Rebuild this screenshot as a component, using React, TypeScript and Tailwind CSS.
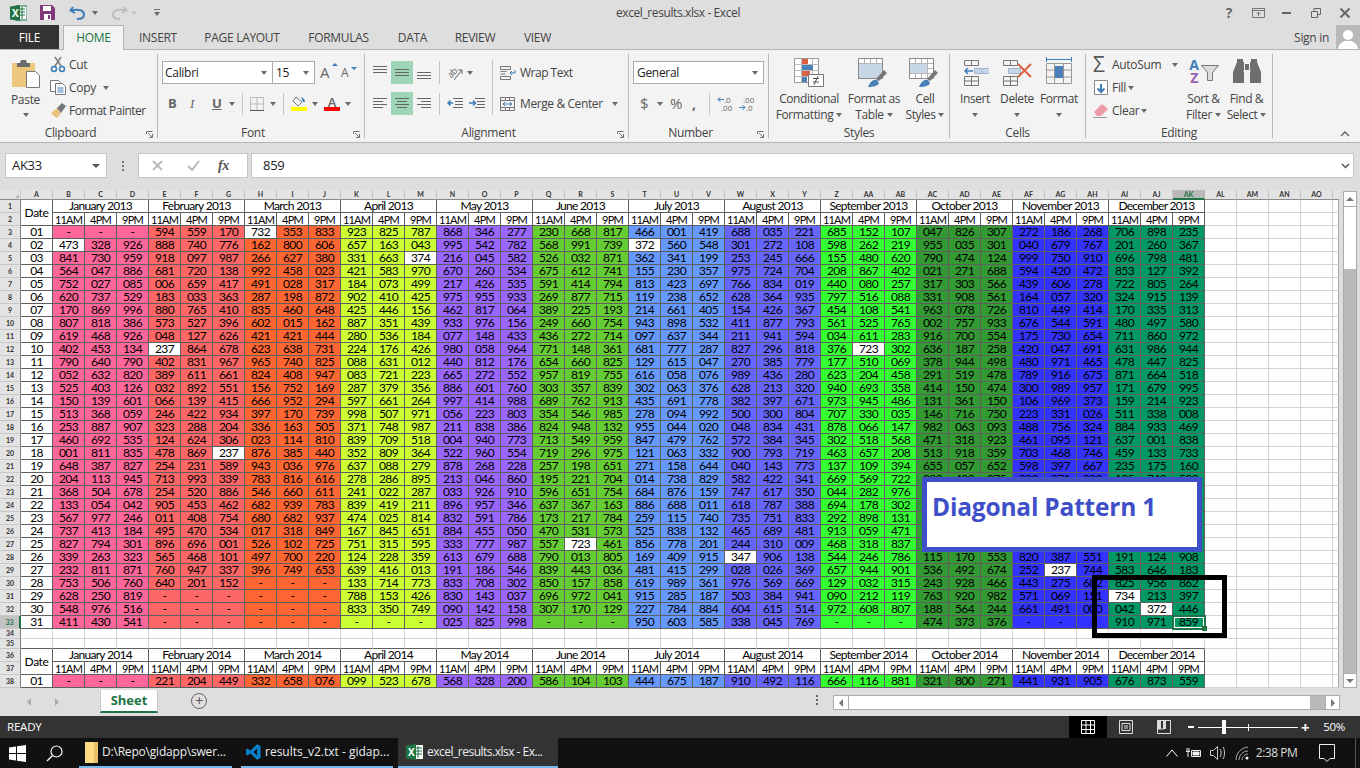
import type { ReactNode } from "react";
import { Fragment } from "react";

const COLS = "A B C D E F G H I J K L M N O P Q R S T U V W X Y Z AA AB AC AD AE AF AG AH AI AJ AK AL AM AN AO".split(" ");
const MONTHS = ["January", "February", "March", "April", "May", "June", "July", "August", "September", "October", "November", "December"];
const TIMES = ["11AM", "4PM", "9PM"];

const MONTH_BG = [
  "bg-[#ff6699]",
  "bg-[#ff6666]",
  "bg-[#ff6633]",
  "bg-[#ccff33]",
  "bg-[#9966ff]",
  "bg-[#66cc33]",
  "bg-[#6699ff]",
  "bg-[#6666ff]",
  "bg-[#33ff33]",
  "bg-[#339933]",
  "bg-[#3333ff]",
  "bg-[#009966]",
];

// * marks a cell without fill, _ sits behind the text box
const DATA_2013 = `- - - 594 559 170 732* 353 833 923 825 787 868 346 277 230 668 817 466 001 419 688 035 221 685 152 107 047 826 307 272 186 268 706 898 235
473* 328 926 888 740 776 162 800 606 657 163 043 995 542 782 568 991 739 372* 560 548 301 272 108 598 262 219 955 035 301 040 679 767 201 260 367
841 730 959 918 097 987 266 627 380 331 663 374* 216 045 582 526 032 871 362 341 199 253 245 666 155 480 620 790 474 124 999 750 910 696 798 481
564 047 886 681 720 138 992 458 023 421 583 970 670 260 534 675 612 741 155 230 357 975 724 704 208 867 402 021 271 688 594 420 472 853 127 392
752 027 085 006 659 417 491 028 317 184 073 499 217 426 535 591 414 794 813 423 697 766 834 019 440 080 257 317 303 566 439 606 278 722 805 264
620 737 529 183 033 363 287 198 872 902 410 425 975 955 933 269 877 715 119 238 652 628 364 935 797 516 088 331 908 561 164 057 320 324 915 139
170 869 996 880 765 410 835 460 648 425 446 156 462 817 064 389 225 193 214 661 405 154 426 367 454 108 541 963 078 726 810 449 414 170 335 313
807 818 386 573 527 396 602 015 162 887 351 439 933 976 156 249 660 754 943 898 532 411 877 793 561 525 765 002 757 933 676 544 591 480 497 580
619 468 926 048 127 626 421 421 444 280 536 184 077 148 433 436 272 714 097 637 344 211 941 594 034 611 283 916 700 554 175 730 654 711 860 972
402 453 134 237* 864 678 623 638 731 224 176 426 980 058 964 771 148 361 681 777 287 827 296 818 376 723* 302 636 187 258 420 047 691 631 986 944
790 640 790 402 831 967 965 740 825 088 631 012 440 812 176 654 660 825 129 615 047 270 385 779 177 510 069 378 944 498 480 971 465 478 447 825
052 632 820 389 611 661 824 408 947 083 721 223 665 272 552 957 819 755 616 058 076 989 436 280 623 204 458 291 519 478 789 916 675 871 664 518
525 403 126 032 892 551 156 752 169 287 379 356 886 601 760 303 357 839 302 063 376 628 213 320 940 693 358 414 150 474 300 989 957 171 679 995
150 139 601 066 139 415 666 952 294 597 661 264 997 414 988 689 762 913 435 691 778 382 397 671 973 945 486 131 361 150 106 969 373 159 214 923
513 368 059 246 422 934 397 170 739 998 507 971 056 223 803 354 546 985 278 094 992 500 300 804 707 330 035 146 716 750 223 331 026 511 338 008
253 887 907 323 288 204 336 163 505 371 748 987 211 838 386 824 948 132 955 044 020 048 834 431 878 066 147 982 063 093 488 756 324 884 933 469
460 692 535 124 624 306 023 114 810 839 709 518 004 940 773 713 549 959 847 479 762 572 384 345 302 518 568 471 318 923 461 095 121 637 001 838
001 811 835 478 869 237* 876 385 440 352 809 364 522 960 554 719 296 975 121 063 332 900 793 719 463 657 208 513 918 359 703 468 746 459 133 733
648 387 827 254 231 589 943 036 976 637 088 279 878 268 228 257 198 651 271 158 644 040 143 773 137 109 394 655 057 652 598 397 667 235 175 160
204 113 945 713 993 339 783 816 616 278 286 895 213 046 860 195 221 704 014 738 829 582 422 341 669 569 722 099 499 075 099 971 099 195 749 509
368 504 678 254 520 886 546 660 611 241 022 287 033 926 910 596 651 754 684 876 159 747 617 350 044 282 976 _ _ _ _ _ _ _ _ _
133 054 042 905 453 462 682 939 783 839 419 211 896 957 346 637 367 163 886 688 011 618 787 388 694 178 302 _ _ _ _ _ _ _ _ _
567 977 246 011 408 754 680 682 937 474 025 814 832 591 786 173 217 784 259 115 740 735 751 833 292 898 131 _ _ _ _ _ _ _ _ _
737 413 184 495 470 534 017 318 849 167 845 651 884 455 050 470 531 573 525 838 132 465 689 481 913 059 471 _ _ _ _ _ _ _ _ _
827 794 301 896 696 001 526 102 725 751 315 595 333 777 987 557 723* 461 856 778 201 244 310 009 468 318 837 _ _ _ _ _ _ _ _ _
339 263 323 565 468 101 497 700 220 124 228 359 613 679 688 790 013 805 169 409 915 347* 906 138 544 246 786 115 170 553 820 387 551 191 124 908
232 811 871 760 947 337 396 749 653 639 416 013 191 186 546 839 443 036 481 415 299 028 026 369 657 944 901 536 492 674 252 237* 744 583 646 183
753 506 760 640 201 152 - - - 133 714 773 833 708 302 850 157 858 619 989 361 976 569 669 129 032 315 243 928 466 443 275 682 825 956 862
628 250 819 - - - - - - 788 153 426 830 143 037 696 972 041 915 285 187 503 384 941 090 212 119 763 920 982 571 069 151 734* 213 397
548 976 516 - - - - - - 833 350 749 090 142 158 307 170 129 227 784 884 604 615 514 972 608 807 188 564 244 661 491 000 042 372* 446
411 430 541 - - - - - - - - - 025 825 998 - - - 950 603 585 338 045 769 - - - 474 373 376 - - - 910 971 859`
  .split("\n")
  .map((l) => l.split(" "));

const DATA_2014 = "- - - 221 204 449 332 658 076 099 523 678 568 328 200 586 104 103 444 675 187 910 492 116 666 116 881 321 800 271 441 931 905 676 873 559".split(" ");

const dark = "border-r border-b border-[#5f5f5f]";

function RowHead({ n, active }: { n: number; active?: boolean }) {
  return (
    <div
      className={`flex items-center justify-center border-b border-[#c8c8c8] text-[7px] font-bold ${
        active ? "border-r-2 border-r-[#217346] bg-[#c2c2c2] text-[#217346]" : "border-r border-r-[#7d7d7d] bg-[#e3e3e3] text-[#333]"
      }`}
    >
      {n}
    </div>
  );
}

function Blanks({ k }: { k: string }) {
  return (
    <>
      {[0, 1, 2, 3].map((i) => (
        <div key={k + i} className="border-r border-b border-[#d4d4d4] bg-white" />
      ))}
      <div className="border-r border-b border-r-[#a9a9a9] border-b-[#d4d4d4] bg-white" />
    </>
  );
}

function HeaderRows({ year, first }: { year: number; first: number }) {
  return (
    <>
      <RowHead n={first} />
      <div className={`row-span-2 flex items-center justify-center bg-white text-[12px] tracking-[-0.4px] ${dark}`}>Date</div>
      {MONTHS.map((m) => (
        <div key={m} className={`col-span-3 flex items-center justify-center bg-white text-[12px] leading-none tracking-[-0.7px] ${dark}`}>
          {m} {year}
        </div>
      ))}
      <Blanks k={`h${first}`} />
      <RowHead n={first + 1} />
      {MONTHS.map((m) =>
        TIMES.map((t) => (
          <div key={m + t} className={`flex items-center justify-center bg-white text-[11px] leading-none tracking-[-0.8px] ${dark}`}>
            {t}
          </div>
        )),
      )}
      <Blanks k={`t${first}`} />
    </>
  );
}

function DataRow({ row, date, values }: { row: number; date: string; values: string[] }) {
  return (
    <>
      <RowHead n={row} active={row === 33} />
      <div className={`flex items-center justify-center bg-white text-[12px] leading-none tracking-[-0.7px] ${dark}`}>{date}</div>
      {values.map((v, i) => {
        const white = v.endsWith("*");
        const selected = row === 33 && i === 35;
        return (
          <div
            key={i}
            className={`relative flex items-center justify-center text-[12px] leading-none tracking-[-0.7px] text-black ${dark} ${
              white ? "bg-white" : MONTH_BG[Math.floor(i / 3)]
            }`}
          >
            {v === "_" ? "" : v.replace("*", "")}
            {selected && (
              <>
                <div className="absolute -top-px right-[-2px] bottom-[-2px] -left-px border-2 border-[#217346] shadow-[inset_0_0_0_1px_#fff]" />
                <div className="absolute right-[-3px] bottom-[-3px] size-[5px] bg-[#217346]" />
              </>
            )}
          </div>
        );
      })}
      <Blanks k={`r${row}`} />
    </>
  );
}

function Sheet() {
  return (
    <div className="relative flex h-[498px]">
      <div className="grid h-[498px] w-[1339px] grid-cols-[21px_repeat(41,32px)_6px] grid-rows-[10px_repeat(33,13px)_10px_10px_repeat(3,13px)] bg-white">
        <div className="flex items-end justify-end border-r border-b border-r-[#c8c8c8] border-b-[#8a8a8a] bg-[#e3e3e3] p-[1px]">
          <div className="size-0 border-b-[4px] border-l-[4px] border-b-[#b0b0b0] border-l-transparent" />
        </div>
        {COLS.map((c) => (
          <div
            key={c}
            className={`flex items-center justify-center border-r text-[7px] leading-none font-bold ${
              c === "AK"
                ? "border-b-2 border-r-[#b0b0b0] border-b-[#217346] bg-[#b9b9b9] text-[#217346]"
                : "border-b border-r-[#c4c4c4] border-b-[#8a8a8a] bg-[#e3e3e3] text-[#333]"
            }`}
          >
            {c}
          </div>
        ))}
        <div className="border-b border-b-[#8a8a8a] bg-[#e3e3e3]" />
        <HeaderRows year={2013} first={1} />
        {DATA_2013.map((values, i) => (
          <DataRow key={i} row={i + 3} date={String(i + 1).padStart(2, "0")} values={values} />
        ))}
        {[34, 35].map((r) => (
          <Fragment key={r}>
            <RowHead n={r} />
            {COLS.slice(0, 37).map((c) => (
              <div key={c} className={`border-r border-b border-r-[#d4d4d4] bg-white ${r === 35 ? "border-b-[#5f5f5f]" : "border-b-[#d4d4d4]"}`} />
            ))}
            <Blanks k={`b${r}`} />
          </Fragment>
        ))}
        <HeaderRows year={2014} first={36} />
        <DataRow row={38} date="01" values={DATA_2014} />
      </div>

      {/* vertical scrollbar */}
      <div className="flex w-[21px] flex-col bg-[#dedede] pt-[1px] pl-[4px]">
        <div className="flex w-[14px] flex-1 flex-col border border-[#ababab] bg-[#b9b9b9]">
          <div className="flex h-[15px] items-center justify-center border-b border-[#ababab] bg-white">
            <div className="size-0 border-x-[4px] border-b-[4px] border-x-transparent border-b-[#777]" />
          </div>
          <div className="h-[62px] bg-white" />
          <div className="flex-1" />
          <div className="flex h-[14px] items-center justify-center border-t border-[#ababab] bg-white">
            <div className="size-0 border-x-[4px] border-t-[4px] border-x-transparent border-t-[#777]" />
          </div>
        </div>
      </div>

      {/* text box and marker drawn over the sheet */}
      <div className="absolute top-[287px] left-[922px] h-[75px] w-[280px] border-[5px] border-[#3f4fc8] bg-white px-[5px] pt-[8px] text-[26px] leading-[32px] font-bold text-[#3f4fc8]">
        <span className="font-['Open_Sans',sans-serif] text-[24.5px] tracking-[-0.2px]">Diagonal Pattern 1</span>
      </div>
      <div className="absolute top-[385px] left-[1092px] h-[63px] w-[135px] border-[5px] border-black" />
    </div>
  );
}

function Caret({ className = "" }: { className?: string }) {
  return <div className={`size-0 border-x-[3.5px] border-t-[4px] border-x-transparent border-t-[#6a6a6a] ${className}`} />;
}

function Sep({ className = "" }: { className?: string }) {
  return <div className={`w-px bg-[#c4c4c4] ${className}`} />;
}

function Group({ className, label, launcher, children }: { className: string; label: string; launcher?: boolean; children: ReactNode }) {
  return (
    <div className={`flex flex-col ${className}`}>
      <div className="h-[74px] flex-none">{children}</div>
      <div className={`relative flex h-[18px] items-center justify-center text-[12px] text-[#444] ${launcher ? "pr-[16px]" : ""}`}>
        {label}
        {launcher && (
          <svg className="absolute right-[4px] bottom-[4px]" width="7" height="7" viewBox="0 0 7 7" fill="none" stroke="#777">
            <path d="M.5 3V.5H6.5M2 2l4 4M3 6.5h3.5V3" />
          </svg>
        )}
      </div>
    </div>
  );
}

function GroupSep() {
  return <div className="mt-[4px] h-[84px] w-px flex-none bg-[#b9b9b9]" />;
}

function BigBtn({ className, icon, l1, l2 }: { className: string; icon: ReactNode; l1: string; l2?: string }) {
  return (
    <div className={`flex flex-none flex-col items-center text-[12px] leading-[16px] tracking-[-0.4px] whitespace-nowrap text-[#444] ${className}`}>
      <div className="flex h-[41px] items-start justify-center pt-[8px]">{icon}</div>
      <div>{l1}</div>
      <div className="flex h-[16px] items-center gap-[3px]">
        {l2}
        <Caret />
      </div>
    </div>
  );
}

function Lines({ ys, w = 14, x = 0 }: { ys: [number, number][]; w?: number; x?: number }) {
  return (
    <svg width={w + x} height="17" viewBox={`0 0 ${w + x} 17`} stroke="#666">
      {ys.map(([y, x2], i) => (
        <path key={i} d={`M${x} ${y}.5H${x + x2}`} />
      ))}
    </svg>
  );
}

const GridIcon = ({ fill }: { fill: ReactNode }) => (
  <svg width="38" height="32" viewBox="0 0 38 32" fill="none">
    {fill}
  </svg>
);

const BrushOver = (
  <>
    <path d="M21 21l8-9 3 3-8 8-3-2z" fill="#777" />
    <path d="M13 29c2-5 5-8 9-7l2 3c-1 3-6 4-11 4z" fill="#4a80b8" />
  </>
);

const TableGrid = (
  <g stroke="#8a8a8a">
    <path d="M3.5.5h24v20h-24z" fill="#fff" />
    <path d="M3.5 5.5h24M3.5 10.5h24M3.5 15.5h24M9.5.5v20M15.5.5v20M21.5.5v20" stroke="#b5b5b5" />
    <path d="M3.5.5h24v20h-24z" />
  </g>
);

function TitleBar() {
  return (
    <div className="flex h-[25px] items-center bg-[#dedede] text-[#444]">
      <svg className="ml-[10px]" width="17" height="16" viewBox="0 0 17 16">
        <rect x="6" y="1" width="11" height="14" fill="#fff" stroke="#217346" />
        <path d="M9 4h6M9 7h6M9 10h6M12 2v12" stroke="#217346" />
        <path d="M0 1.5L10 0v16L0 14.5z" fill="#217346" />
        <text x="2" y="12" fontSize="10" fontWeight="700" fill="#fff">X</text>
      </svg>
      <svg className="ml-[13px]" width="15" height="15" viewBox="0 0 15 15">
        <path d="M0 0h12l3 3v12H0z" fill="#80397b" />
        <path d="M3 1h8v5H3z" fill="#fff" />
        <path d="M4 9h7v6H4z" fill="#fff" />
        <path d="M8 10h2v4H8z" fill="#80397b" />
      </svg>
      <svg className="ml-[14px]" width="17" height="14" viewBox="0 0 17 14" fill="none" stroke="#3f7db8" strokeWidth="2">
        <path d="M4 1L1.5 4.5 6 7" />
        <path d="M2 4.5c8-2 13 0 13 4s-4 4.500-7 4.500" />
      </svg>
      <Caret className="ml-[6px]" />
      <svg className="ml-[13px]" width="17" height="14" viewBox="0 0 17 14" fill="none" stroke="#bdbdbd" strokeWidth="2">
        <path d="M13 1l2.500 3.500L11 7" />
        <path d="M15 4.500c-8-2-13 0-13 4s4 4.500 7 4.500" />
      </svg>
      <div className="ml-[3px] size-0 border-x-[3.500px] border-t-[4px] border-x-transparent border-t-[#c4c4c4]" />
      <div className="ml-[16px] flex w-[7px] flex-col items-center gap-[2px]">
        <div className="h-px w-[6px] bg-[#777]" />
        <Caret />
      </div>
      <div className="flex-1 pr-[24px] text-center text-[12px] tracking-[-0.4px]">excel_results.xlsx - Excel</div>
      <div className="flex items-center text-[#666]">
        <span className="w-[18px] text-center text-[14px] font-bold">?</span>
        <svg className="ml-[14px]" width="13" height="10" viewBox="0 0 13 10" fill="none" stroke="#777">
          <path d="M.5.5h12v9H.5zM.5 2.500h12M6.500 8V4M4.500 6l2-2 2 2" />
        </svg>
        <div className="ml-[17px] h-[2px] w-[9px] bg-[#666]" />
        <svg className="ml-[20px]" width="10" height="10" viewBox="0 0 10 10" fill="none" stroke="#666">
          <path d="M.5 3.500h6v6h-6zM3 3V.5h6.500v6H7" />
        </svg>
        <svg className="mr-[10px] ml-[19px]" width="10" height="10" viewBox="0 0 10 10" stroke="#666" strokeWidth="2">
          <path d="M.5.5l9 9M9.500.5l-9 9" />
        </svg>
      </div>
    </div>
  );
}

function TabRow() {
  const tabs: [string, string][] = [
    ["INSERT", "w-[68px]"],
    ["PAGE LAYOUT", "w-[100px]"],
    ["FORMULAS", "w-[93px]"],
    ["DATA", "w-[55px]"],
    ["REVIEW", "w-[70px]"],
    ["VIEW", "w-[55px]"],
  ];
  return (
    <div className="relative flex h-[25px] items-stretch bg-[#dedede] text-[12px] text-[#444]">
      <div className="flex w-[59px] items-center justify-center bg-[#333] text-white">FILE</div>
      <div className="z-10 mt-0 ml-[4px] flex h-[25px] w-[61px] items-center justify-center border-x border-t border-[#b5b5b5] bg-[#f3f3f3] text-[#217346]">
        HOME
      </div>
      {tabs.map(([t, w]) => (
        <div key={t} className={`flex items-center justify-center ${w}`}>
          {t}
        </div>
      ))}
      <div className="ml-auto flex items-center gap-[7px]">
        <span>Sign in</span>
        <div className="flex h-[25px] w-[24px] items-end justify-center bg-[#b9b9b9]">
          <svg width="22" height="22" viewBox="0 0 22 22" fill="#fff">
            <circle cx="11" cy="7" r="5" />
            <path d="M1 22c0-6 4-8 7-9h6c3 1 7 3 7 9z" />
          </svg>
        </div>
      </div>
      <div className="absolute inset-x-0 bottom-0 h-px bg-[#b5b5b5]" />
    </div>
  );
}

function Ribbon() {
  const row = "flex h-[23px] items-center";
  const sm = "flex h-[23px] items-center text-[12px] text-[#444]";
  const glyph = "text-[13px] text-[#666]";
  return (
    <div className="flex h-[93px] border-b border-[#b5b5b5] bg-[#f3f3f3]">
      {/* Clipboard */}
      <Group className="w-[157px]" label="Clipboard" launcher>
        <div className="flex pt-[3px]">
          <div className="flex w-[50px] flex-col items-center pl-[1px] text-[12px] leading-[15px] text-[#444]">
            <svg className="mt-[5px]" width="30" height="30" viewBox="0 0 30 30">
              <rect x="1" y="5" width="23" height="24" fill="#eec77e" />
              <path d="M6 5h3l1-3h5l1 3h3v4H6z" fill="#6b6b6b" />
              <path d="M15.500 13.500h9l4 4v12h-13z" fill="#fff" stroke="#777" />
            </svg>
            <div className="mt-[4px]">Paste</div>
            <Caret className="mt-[6px]" />
          </div>
          <div className="flex flex-col text-[12px] text-[#444]">
            <div className={sm}>
              <svg width="18" height="17" viewBox="0 0 18 17" fill="none">
                <path d="M5 1l6 9M11 1L5 10" stroke="#7a7a7a" strokeWidth="1.500" />
                <circle cx="4" cy="13" r="2.500" stroke="#3f7db8" strokeWidth="1.500" />
                <circle cx="12" cy="13" r="2.500" stroke="#3f7db8" strokeWidth="1.500" />
              </svg>
              <span className="ml-[1px]">Cut</span>
            </div>
            <div className={sm}>
              <svg width="17" height="15" viewBox="0 0 17 15" fill="#fff" stroke="#777">
                <path d="M.5.5h8l2 2v9H.5z" />
                <path d="M5.500 3.500h7l3 3v8h-10z" />
                <path d="M7.500 8h6M7.500 10h6M7.500 12h6" stroke="#3f7db8" />
              </svg>
              <span className="ml-[2px]">Copy</span>
              <Caret className="ml-[7px]" />
            </div>
            <div className={sm}>
              <svg width="17" height="15" viewBox="0 0 17 15">
                <path d="M1 10l6-5 4 5-4 5c-2-1-4-3-6-5z" fill="#e9c27d" />
                <path d="M7 5l5-5 4 3-5 7z" fill="#777" />
              </svg>
              <span className="ml-[2px] tracking-[-0.5px]">Format Painter</span>
            </div>
          </div>
        </div>
      </Group>
      <GroupSep />

      {/* Font */}
      <Group className="w-[206px]" label="Font" launcher>
        <div className="pt-[11px] pl-[4px]">
          <div className={row}>
            <div className="flex h-[23px] w-[111px] items-center justify-between border border-[#ababab] bg-white pr-[5px] pl-[2px] text-[12px] text-[#222]">
              Calibri
              <Caret />
            </div>
            <div className="-ml-px flex h-[23px] w-[43px] items-center justify-between border border-[#ababab] bg-white pr-[5px] pl-[3px] text-[12px] text-[#222]">
              15
              <Caret />
            </div>
            <div className="relative ml-[5px] w-[18px] text-[15px] text-[#666]">
              A
              <div className="absolute top-[2px] right-0 size-0 border-x-[3px] border-b-[3px] border-x-transparent border-b-[#3f7db8]" />
            </div>
            <div className="relative ml-[3px] w-[16px] text-[12px] text-[#666]">
              A
              <div className="absolute top-[3px] right-0 size-0 border-x-[3px] border-t-[3px] border-x-transparent border-t-[#3f7db8]" />
            </div>
          </div>
          <div className={`${row} mt-[8px]`}>
            <span className={`ml-[6px] w-[22px] font-bold ${glyph}`}>B</span>
            <span className={`w-[22px] font-serif italic ${glyph}`}>I</span>
            <span className={`w-[16px] font-bold underline ${glyph}`}>U</span>
            <Caret className="ml-[1px]" />
            <Sep className="ml-[7px] h-[22px]" />
            <svg className="ml-[7px]" width="14" height="14" viewBox="0 0 14 14" fill="none" stroke="#888" strokeDasharray="1 1">
              <path d="M.5.5h13v13H.5zM7 .5v13M.5 7h13" />
              <path d="M0 13.500h14" stroke="#555" strokeDasharray="none" />
            </svg>
            <Caret className="ml-[6px]" />
            <Sep className="ml-[7px] h-[22px]" />
            <div className="ml-[7px] flex w-[16px] flex-col items-center">
              <svg width="14" height="11" viewBox="0 0 14 11" fill="none">
                <path d="M4 1l6 5-4 4-5-5z" stroke="#777" />
                <path d="M9 1c3 1 4 3 4 5h-2z" fill="#3f7db8" />
              </svg>
              <div className="h-[4px] w-[16px] bg-[#ffff00]" />
            </div>
            <Caret className="ml-[5px]" />
            <div className="ml-[6px] flex w-[16px] flex-col items-center">
              <span className="text-[13px] leading-[12px] font-semibold text-[#666]">A</span>
              <div className="mt-[-1px] h-[4px] w-[16px] bg-[#ff0000]" />
            </div>
            <Caret className="ml-[5px]" />
          </div>
        </div>
      </Group>
      <GroupSep />

      {/* Alignment */}
      <Group className="w-[263px]" label="Alignment" launcher>
        <div className="pt-[11px] pl-[8px]">
          <div className={row}>
            <div className="w-[14px]">
              <Lines ys={[[2, 14], [5, 14], [8, 14]]} />
            </div>
            <div className="ml-[4px] flex h-[23px] w-[22px] items-center justify-center bg-[#9fd5b7]">
              <Lines ys={[[5, 14], [8, 14], [11, 14]]} />
            </div>
            <div className="ml-[4px] w-[14px]">
              <Lines ys={[[8, 14], [11, 14], [14, 14]]} />
            </div>
            <Sep className="ml-[8px] h-[23px]" />
            <div className="ml-[7px] flex w-[16px] items-center">
              <span className="-rotate-45 text-[9px] leading-[9px] text-[#666]">ab</span>
              <svg className="-ml-[3px] mt-[3px]" width="9" height="13" viewBox="0 0 9 13" fill="none" stroke="#666">
                <path d="M0 12L8 2M4 2h4v4" />
              </svg>
            </div>
            <Caret className="ml-[4px]" />
            <Sep className="ml-[19px] h-[55px] translate-y-[15px]" />
            <svg className="ml-[7px]" width="16" height="16" viewBox="0 0 16 16" fill="none" stroke="#777">
              <path d="M.5 1.500h10v3H.5zM.5 6.500h6M.5 9h5M.5 11.500h10v3H.5z" />
              <path d="M10 8h5v-3M10 8l2-2M10 8l2 2" stroke="#3f7db8" />
            </svg>
            <span className="ml-[4px] text-[12px] tracking-[-0.5px] text-[#444]">Wrap Text</span>
          </div>
          <div className={`${row} mt-[8px]`}>
            <div className="w-[14px]">
              <Lines ys={[[3, 14], [6, 10], [9, 14], [12, 10]]} />
            </div>
            <div className="ml-[4px] flex h-[23px] w-[22px] items-center justify-center bg-[#9fd5b7]">
              <svg width="14" height="17" viewBox="0 0 14 17" stroke="#666">
                <path d="M0 3.500h14M2 6.500h10M0 9.500h14M2 12.500h10" />
              </svg>
            </div>
            <svg className="ml-[4px]" width="14" height="17" viewBox="0 0 14 17" stroke="#666">
              <path d="M0 3.500h14M4 6.500h10M0 9.500h14M4 12.500h10" />
            </svg>
            <Sep className="ml-[8px] h-[22px]" />
            <svg className="ml-[7px]" width="16" height="17" viewBox="0 0 16 17" fill="none">
              <path d="M6 3.500h10M8 6.500h8M8 9.500h8M6 12.500h10" stroke="#666" />
              <path d="M6 8H1M3.500 5.500L1 8l2.500 2.500" stroke="#3f7db8" strokeWidth="1.500" />
            </svg>
            <svg className="ml-[6px]" width="16" height="17" viewBox="0 0 16 17" fill="none">
              <path d="M6 3.500h10M8 6.500h8M8 9.500h8M6 12.500h10" stroke="#666" />
              <path d="M0 8h6M4 5.500L6.500 8 4 10.500" stroke="#3f7db8" strokeWidth="1.500" />
            </svg>
            <svg className="ml-[15px]" width="16" height="16" viewBox="0 0 16 16" fill="none" stroke="#777">
              <path d="M.5 1.500h14v13H.5zM.5 4.500h14M.5 11.500h14M5.500 1.500v3M9.500 1.500v3M5.500 11.500v3M9.500 11.500v3" />
              <path d="M3 8h9M5 6L3 8l2 2M10 6l2 2-2 2" stroke="#3f7db8" />
            </svg>
            <span className="ml-[4px] text-[12px] tracking-[-0.4px] text-[#444]">Merge &amp; Center</span>
            <Caret className="ml-[9px]" />
          </div>
        </div>
      </Group>
      <GroupSep />

      {/* Number */}
      <Group className="w-[139px]" label="Number" launcher>
        <div className="pt-[11px] pl-[4px]">
          <div className="flex h-[23px] w-[131px] items-center justify-between border border-[#ababab] bg-white px-[3px] pr-[5px] text-[12px] text-[#222]">
            General
            <Caret />
          </div>
          <div className={`${row} mt-[8px] text-[#666]`}>
            <span className="ml-[7px] w-[12px] text-[15px]">$</span>
            <Caret className="ml-[5px]" />
            <span className="ml-[7px] w-[16px] text-[15px]">%</span>
            <span className="ml-[6px] w-[10px] text-[14px] font-bold">,</span>
            <Sep className="ml-[7px] h-[22px]" />
            <div className="ml-[7px] w-[16px] text-[8px] leading-[8px] tracking-normal">
              <div className="flex items-center">
                <svg width="7" height="7" viewBox="0 0 7 7" fill="none" stroke="#3f7db8">
                  <path d="M7 3.500H1M3.500 1L1 3.500 3.500 6" />
                </svg>
                <span>.0</span>
              </div>
              <div className="pl-[4px]">.00</div>
            </div>
            <div className="ml-[6px] w-[16px] text-[8px] leading-[8px] tracking-normal">
              <div className="pl-[4px]">.00</div>
              <div className="flex items-center">
                <svg width="7" height="7" viewBox="0 0 7 7" fill="none" stroke="#3f7db8">
                  <path d="M0 3.500h6M3.500 1L6 3.500 3.500 6" />
                </svg>
                <span>.0</span>
              </div>
            </div>
          </div>
        </div>
      </Group>
      <GroupSep />

      {/* Styles */}
      <Group className="w-[180px]" label="Styles">
        <div className="flex pl-[5px]">
          <BigBtn
            className="w-[70px]"
            l1="Conditional"
            l2="Formatting"
            icon={
              <svg width="30" height="30" viewBox="0 0 30 30" fill="none">
                <path d="M.5.5h24v24H.5z" fill="#fff" stroke="#999" />
                <path d="M.5 6.500h24M.5 12.500h24M.5 18.500h24M7.500.5v24M18.500.5v24" stroke="#bbb" />
                <path d="M8 1h6v5H8z" fill="#db6240" />
                <path d="M8 7h11v5H8z" fill="#4a80b8" />
                <path d="M8 13h8v5H8z" fill="#db6240" />
                <path d="M8 19h5v5H8z" fill="#4a80b8" />
                <path d="M14.500 16.500h15v12h-15z" fill="#fff" stroke="#777" />
                <path d="M19 20.500h6M19 24h6M24 18l-4 9" stroke="#555" />
              </svg>
            }
          />
          <BigBtn
            className="w-[60px]"
            l1="Format as"
            l2="Table"
            icon={
              <GridIcon
                fill={
                  <>
                    {TableGrid}
                    <path d="M4 6h23v14H4z" fill="#c7d7e8" />
                    {BrushOver}
                  </>
                }
              />
            }
          />
          <BigBtn
            className="w-[42px]"
            l1="Cell"
            l2="Styles"
            icon={
              <GridIcon
                fill={
                  <>
                    {TableGrid}
                    <path d="M4 6h17v9H4z" fill="#c7d7e8" />
                    {BrushOver}
                  </>
                }
              />
            }
          />
        </div>
      </Group>
      <GroupSep />

      {/* Cells */}
      <Group className="w-[135px]" label="Cells">
        <div className="flex pl-[4px]">
          <BigBtn
            className="w-[42px]"
            l1="Insert"
            icon={
              <svg width="28" height="28" viewBox="0 0 28 28" fill="none" stroke="#777">
                <path d="M3.500 2.500h14v5h-14zM10.500 2.500v5M3.500 18.500h14v9h-14zM10.500 18.500v9M3.500 23h14" />
                <path d="M13.500 10.500h15v5h-15zM21 10.500v5" fill="#c7d7e8" stroke="#9db5cf" />
                <path d="M12 13H4M7 10l-3 3 3 3" stroke="#3f7db8" strokeWidth="1.500" />
              </svg>
            }
          />
          <BigBtn
            className="w-[42px]"
            l1="Delete"
            icon={
              <svg width="30" height="28" viewBox="0 0 30 28" fill="none" stroke="#777">
                <path d="M1.500 2.500h14v5h-14zM8.500 2.500v5M1.500 18.500h14v9h-14zM8.500 18.500v9M1.500 23h14" />
                <path d="M6.500 10.500h12v5h-12z" fill="#c7d7e8" stroke="#9db5cf" />
                <path d="M16 6l13 13M29 6L16 19" stroke="#db6240" strokeWidth="2" />
              </svg>
            }
          />
          <BigBtn
            className="w-[42px]"
            l1="Format"
            icon={
              <svg width="28" height="31" viewBox="0 0 28 31" fill="none" stroke="#999" className="-mt-[2px]">
                <path d="M1.500 1v5M26.500 1v5M2 3.500h24" stroke="#3f7db8" />
                <path d="M1.500 7.500h25v20h-25zM1.500 14h25M1.500 21h25M9.500 7.500v20M18.500 7.500v20" />
                <path d="M10 10h8v12h-8z" fill="#4a80b8" stroke="none" />
              </svg>
            }
          />
        </div>
      </Group>
      <GroupSep />

      {/* Editing */}
      <Group className="w-[186px]" label="Editing">
        <div className="flex">
          <div className="flex w-[96px] flex-col pt-[3px] pl-[7px]">
            <div className={sm}>
              <span className="w-[19px] text-[21px] leading-none text-[#555]">Σ</span>
              <span>AutoSum</span>
              <Caret className="ml-[11px]" />
            </div>
            <div className={sm}>
              <svg className="ml-[1px]" width="14" height="15" viewBox="0 0 14 15" fill="none">
                <path d="M.5.5h13v14H.5z" stroke="#888" fill="#fff" />
                <path d="M7 4v8M3.500 8.500L7 12l3.500-3.500" stroke="#3f7db8" strokeWidth="2" />
              </svg>
              <span className="ml-[4px]">Fill</span>
              <Caret className="ml-[2px]" />
            </div>
            <div className={sm}>
              <svg width="16" height="15" viewBox="0 0 16 15">
                <path d="M1 9l8-8 6 5-7 7H4z" fill="#ef9aa8" />
                <path d="M0 14.500h14" stroke="#999" />
              </svg>
              <span className="ml-[3px]">Clear</span>
              <Caret className="ml-[2px]" />
            </div>
          </div>
          <BigBtn
            className="w-[43px]"
            l1="Sort &"
            l2="Filter"
            icon={
              <div className="flex items-start">
                <div className="flex w-[12px] flex-col items-center text-[14px] leading-[13px] font-bold">
                  <span className="text-[#3f7db8]">A</span>
                  <span className="text-[#9b5fb0]">Z</span>
                </div>
                <svg className="mt-[7px] ml-[1px]" width="18" height="16" viewBox="0 0 18 16">
                  <path d="M.5.500h17l-6 7v8h-5v-8z" fill="#ddd" stroke="#777" />
                </svg>
              </div>
            }
          />
          <BigBtn
            className="w-[43px]"
            l1="Find &"
            l2="Select"
            icon={
              <svg width="28" height="26" viewBox="0 0 28 26" fill="#6e6e6e">
                <path d="M4 4V1h6v3h1v9h-1l1 1v11H0V14zM24 4V1h-6v3h-1v9h1l-1 1v11h11V14z" />
                <path d="M12 6h4v6h-4z" />
              </svg>
            }
          />
        </div>
      </Group>
      <GroupSep />
      <div className="flex flex-1 items-end justify-end pr-[10px] pb-[5px]">
        <svg width="10" height="6" viewBox="0 0 10 6" fill="none" stroke="#666" strokeWidth="1.500">
          <path d="M1 5l4-4 4 4" />
        </svg>
      </div>
    </div>
  );
}

function FormulaBar() {
  return (
    <div className="flex h-[47px] items-start bg-[#dedede] pt-[10px] text-[13px] text-[#222]">
      <div className="ml-[5px] flex h-[25px] w-[102px] items-center justify-between border border-[#c6c6c6] bg-white pr-[6px] pl-[6px]">
        AK33
        <div className="size-0 border-x-[4px] border-t-[4px] border-x-transparent border-t-[#555]" />
      </div>
      <div className="ml-[14px] flex h-[25px] w-[3px] flex-col items-center justify-center gap-[2px]">
        <div className="size-[2px] bg-[#777]" />
        <div className="size-[2px] bg-[#777]" />
        <div className="size-[2px] bg-[#777]" />
      </div>
      <div className="ml-[14px] flex h-[25px] w-[110px] items-center border border-[#c6c6c6] bg-white pl-[13px]">
        <svg width="11" height="11" viewBox="0 0 11 11" stroke="#b9b9b9" strokeWidth="1.800">
          <path d="M1 1l9 9M10 1l-9 9" />
        </svg>
        <svg className="ml-[24px]" width="13" height="11" viewBox="0 0 13 11" fill="none" stroke="#b9b9b9" strokeWidth="2">
          <path d="M1 6l4 4 7-9" />
        </svg>
        <span className="ml-[18px] font-['Liberation_Serif',serif] text-[14px] font-bold text-[#555] italic">fx</span>
      </div>
      <div className="mr-[6px] ml-[3px] flex h-[25px] flex-1 items-center justify-between border border-[#c6c6c6] bg-white pr-[3px] pl-[11px]">
        859
        <svg width="9" height="6" viewBox="0 0 9 6" fill="none" stroke="#555" strokeWidth="1.500">
          <path d="M1 1l3.500 3.500L8 1" />
        </svg>
      </div>
    </div>
  );
}

function SheetBar() {
  return (
    <div className="flex h-[28px] items-start bg-[#dedede]">
      <div className="mt-[10px] ml-[27px] size-0 border-y-[4px] border-r-[4px] border-y-transparent border-r-[#a8a8a8]" />
      <div className="mt-[10px] ml-[24px] size-0 border-y-[4px] border-l-[4px] border-y-transparent border-l-[#a8a8a8]" />
      <div className="mt-[2px] ml-[41px] flex h-[23px] w-[58px] items-center justify-center border-x border-b-2 border-x-[#c8c8c8] border-b-[#217346] bg-white text-[13px] font-bold tracking-normal text-[#217346]">
        Sheet
      </div>
      <div className="mt-[5px] ml-[33px] flex size-[16px] items-center justify-center rounded-full border border-[#666] text-[14px] leading-none text-[#555]">+</div>
      <div className="mt-[7px] ml-[609px] flex flex-col gap-[2px]">
        <div className="size-[2px] bg-[#666]" />
        <div className="size-[2px] bg-[#666]" />
        <div className="size-[2px] bg-[#666]" />
      </div>
      <div className="mt-[7px] ml-[15px] flex h-[15px] w-[507px] border border-[#ababab] bg-[#b9b9b9]">
        <div className="flex w-[15px] items-center justify-center border-r border-[#ababab] bg-white">
          <div className="size-0 border-y-[4px] border-r-[4px] border-y-transparent border-r-[#777]" />
        </div>
        <div className="w-[461px] bg-white" />
        <div className="flex-1" />
        <div className="flex w-[14px] items-center justify-center border-l border-[#ababab] bg-white">
          <div className="size-0 border-y-[4px] border-l-[4px] border-y-transparent border-l-[#777]" />
        </div>
      </div>
    </div>
  );
}

function StatusBar() {
  return (
    <div className="flex h-[22px] items-center bg-[#333] text-white">
      <span className="ml-[7px] text-[11.500px] tracking-[-0.2px]">READY</span>
      <div className="ml-auto flex h-[22px] items-center">
        <div className="flex h-[22px] w-[38px] items-center justify-center bg-black">
          <svg width="14" height="14" viewBox="0 0 14 14" fill="none" stroke="#fff">
            <path d="M.5.5h13v13H.5zM.5 5h13M.5 9.500h13M5 .5v13M9.500.5v13" />
          </svg>
        </div>
        <svg className="ml-[12px]" width="14" height="14" viewBox="0 0 14 14" fill="none" stroke="#ddd">
          <path d="M.5.5h13v13H.5zM3 3.500h8v7H3zM5 6h4M5 8h4" />
        </svg>
        <svg className="ml-[24px]" width="14" height="14" viewBox="0 0 14 14" fill="none" stroke="#ddd">
          <path d="M.5.5h13v13H.5zM.5 9h6" />
          <path d="M1 1h3v8H1zM6 1h3v8H6z" fill="#ddd" stroke="none" />
        </svg>
        <div className="ml-[17px] h-[2px] w-[6px] bg-white" />
        <div className="relative ml-[4px] flex h-px w-[100px] items-center bg-white">
          <div className="absolute left-[24px] h-[14px] w-[4px] bg-white" />
          <div className="absolute left-[50px] h-[7px] w-px bg-white" />
        </div>
        <div className="ml-[3px] text-[15px] leading-none font-bold">+</div>
        <span className="mr-[15px] ml-[14px] text-[11.500px] tracking-[-0.3px]">50%</span>
      </div>
    </div>
  );
}

function Taskbar() {
  const item = "flex h-[30px] items-center border-b-2 border-[#76b9ed] text-[12px] text-[#eee] whitespace-nowrap";
  return (
    <div className="flex h-[30px] items-center bg-[#111]">
      <svg className="ml-[9px]" width="17" height="17" viewBox="0 0 17 17" fill="#fff">
        <path d="M0 2.500l7-1v6.500H0zM8 1.300L17 0v8H8zM0 9h7v6.500l-7-1zM8 9h9v8l-9-1.300z" />
      </svg>
      <svg className="ml-[20px]" width="17" height="17" viewBox="0 0 17 17" fill="none" stroke="#fff" strokeWidth="1.200">
        <circle cx="10.500" cy="6.500" r="5.500" />
        <path d="M6.500 10.500L1 16" />
      </svg>
      <div className={`${item} ml-[16px] w-[153px] pl-[6px]`}>
        <svg width="13" height="21" viewBox="0 0 13 21">
          <path d="M0 0h13v21H0z" fill="#fcdc84" />
          <path d="M9 0h4v21H9z" fill="#e8c066" />
        </svg>
        <span className="ml-[4px] tracking-[-0.2px]">D:\Repo\gidapp\swer...</span>
      </div>
      <div className={`${item} ml-[9px] w-[152px] pl-[4px]`}>
        <svg width="17" height="20" viewBox="0 0 24 24" fill="#0b7fcc" fillRule="evenodd">
          <path d="M17 1l5 2.500v17L17 23 7.500 14 3.500 17 1.500 16V8l2-1 4 3zM17 7l-5 5 5 5z" />
        </svg>
        <span className="ml-[3px] tracking-normal">results_v2.txt - gidap...</span>
      </div>
      <div className={`${item} ml-[5px] w-[160px] bg-[#333] pl-[8px]`}>
        <svg width="17" height="16" viewBox="0 0 17 16">
          <rect x="6" y="1" width="11" height="14" fill="#fff" />
          <path d="M9 4h7M9 7h7M9 10h7M12 2v12" stroke="#217346" />
          <path d="M0 1.500L10 0v16L0 14.500z" fill="#217346" />
          <text x="2" y="12" fontSize="10" fontWeight="700" fill="#fff">X</text>
        </svg>
        <span className="ml-[4px] tracking-[-0.5px]">excel_results.xlsx - Ex...</span>
      </div>
      <div className="ml-auto flex items-center text-[12px] text-[#ddd]">
        <svg width="12" height="8" viewBox="0 0 12 8" fill="none" stroke="#fff">
          <path d="M.5 7.500l5.500-6.500 5.500 6.500" />
        </svg>
        <svg className="ml-[8px]" width="16" height="12" viewBox="0 0 16 12" fill="none" stroke="#eee">
          <path d="M5.500 3.500h9v6h-9z" />
          <path d="M7 5h6v3H7z" fill="#eee" />
          <path d="M0 4.500h4M1 1v3.500M3 1v3.500M2 5v5" />
        </svg>
        <svg className="ml-[8px]" width="16" height="16" viewBox="0 0 16 16" fill="none" stroke="#ccc">
          <path d="M.5 5.500h3l4-4v13l-4-4h-3z" />
          <path d="M10 4c1.500 2 1.500 6 0 8M13 2c2 3 2 9 0 12" />
        </svg>
        <svg className="ml-[9px]" width="14" height="14" viewBox="0 0 14 14" fill="none" stroke="#aaa">
          <path d="M1 14C1 7 6 2 13 1M4 14c0-5 4-9 9-9M7 14c0-3 3-6 6-6" />
          <circle cx="12" cy="12" r="1.500" fill="#fff" stroke="none" />
        </svg>
        <span className="ml-[6px] w-[43px] text-center tracking-[-0.5px] whitespace-nowrap">2:38 PM</span>
        <svg className="ml-[21px]" width="17" height="19" viewBox="0 0 17 19" fill="none" stroke="#eee">
          <path d="M.5.5h15v14H11l-3 3-3-3H.5z" />
        </svg>
        <div className="mr-[4px] ml-[19px] h-[30px] w-px bg-[#555]" />
      </div>
    </div>
  );
}

export default function App() {
  return (
    <div className="h-[768px] w-[1360px] overflow-hidden bg-[#dedede] font-['Open_Sans',sans-serif] tracking-[-0.3px]">
      <TitleBar />
      <TabRow />
      <Ribbon />
      <FormulaBar />
      <div className="font-['Lato',sans-serif] tracking-normal">
        <Sheet />
      </div>
      <SheetBar />
      <StatusBar />
      <Taskbar />
    </div>
  );
}
